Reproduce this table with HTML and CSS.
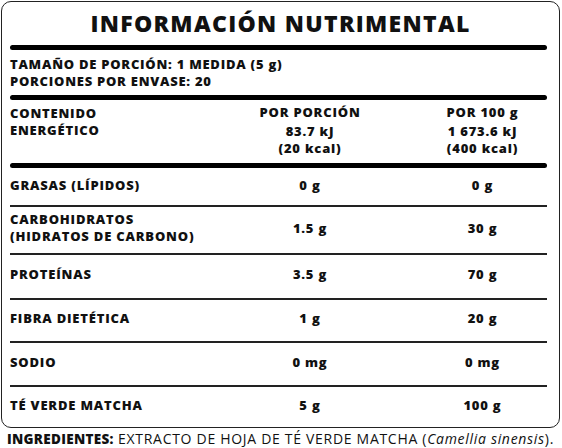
FILE: index.html
```html
<!DOCTYPE html>
<html lang="es">
<head>
<meta charset="utf-8">
<link rel="stylesheet" href="styles.css">
</head>
<body>
<div class="page">
  <section class="label">
    <h1 class="title">INFORMACIÓN NUTRIMENTAL</h1>
    <div class="rule thick"></div>
    <div class="serving">
      <div>TAMAÑO DE PORCIÓN: 1 MEDIDA (5 g)</div>
      <div>PORCIONES POR ENVASE: 20</div>
    </div>
    <div class="rule thick"></div>
    <div class="grid head">
      <div class="name">CONTENIDO<br>ENERGÉTICO</div>
      <div class="val"><div class="colhead">POR PORCIÓN</div><div>83.7 kJ<br>(20 kcal)</div></div>
      <div class="val v3"><div class="colhead">POR 100 g</div><div>1 673.6 kJ<br>(400 kcal)</div></div>
    </div>
    <div class="rule thick"></div>
    <div class="grid row r1">
      <div class="name">GRASAS (LÍPIDOS)</div>
      <div class="val">0 g</div>
      <div class="val v3">0 g</div>
    </div>
    <div class="rule thin"></div>
    <div class="grid row r2">
      <div class="name">CARBOHIDRATOS<br>(HIDRATOS DE CARBONO)</div>
      <div class="val">1.5 g</div>
      <div class="val v3">30 g</div>
    </div>
    <div class="rule thin"></div>
    <div class="grid row r3">
      <div class="name">PROTEÍNAS</div>
      <div class="val">3.5 g</div>
      <div class="val v3">70 g</div>
    </div>
    <div class="rule thin"></div>
    <div class="grid row r4">
      <div class="name">FIBRA DIETÉTICA</div>
      <div class="val">1 g</div>
      <div class="val v3">20 g</div>
    </div>
    <div class="rule thin"></div>
    <div class="grid row r5">
      <div class="name">SODIO</div>
      <div class="val">0 mg</div>
      <div class="val v3">0 mg</div>
    </div>
    <div class="rule thin"></div>
    <div class="grid row r6">
      <div class="name">TÉ VERDE MATCHA</div>
      <div class="val">5 g</div>
      <div class="val v3">100 g</div>
    </div>
  </section>
  <p class="ingredients"><b>INGREDIENTES:</b> EXTRACTO DE HOJA DE TÉ VERDE MATCHA (<i>Camellia sinensis</i>).</p>
</div>
</body>
</html>
```
FILE: styles.css
```css
* { box-sizing: border-box; }
html, body { margin: 0; padding: 0; background: #fff; }
body {
  font-family: "Open Sans", Inter, "DejaVu Sans", sans-serif;
  color: #111;
}
.page { padding: 1px 0 0 1px; width: 562px; }
.label {
  width: 559px;
  height: 427px;
  border: 1.5px solid #222;
  border-radius: 10px;
  padding: 0 12px 0 8px;
  display: flex;
  flex-direction: column;
}
.title {
  margin: 0 0 0 4px;
  text-align: center;
  font-size: 23px;
  font-weight: 800;
  letter-spacing: 1.3px;
  line-height: 28px;
  padding: 7px 0 8px 0;
}
.rule { flex: none; }
.rule.thick { height: 5px; background: #000; border-radius: 3px; }
.rule.thin { height: 1.5px; background: #222; }
.serving {
  font-weight: 800;
  font-size: 13px;
  line-height: 17px;
  letter-spacing: 0.75px;
  padding: 6px 0 5px 0;
}
.grid {
  display: grid;
  grid-template-columns: 200px 200px 1fr;
  align-items: center;
  font-weight: 800;
  font-size: 13px;
  line-height: 17px;
  letter-spacing: 0.8px;
  flex: none;
}
.val { text-align: center; }
.v3 { padding-left: 8px; }
.head { height: 63px; align-items: start; padding-top: 4px; }
.head .name { padding-top: 1px; }
.head .colhead { margin-bottom: 2px; }
.row { padding-bottom: 3px; }
.r1 { height: 37px; }
.r2 { height: 46.5px; }
.r3 { height: 43.5px; }
.r4 { height: 41.5px; }
.r5 { height: 42.5px; }
.r6 { flex: 1; }
.ingredients {
  margin: 3px 0 0 6px;
  font-size: 14px;
  line-height: 15px;
  height: 16px;
  letter-spacing: 0.7px;
  white-space: nowrap;
}
.ingredients b { font-weight: 800; font-size: 13.5px; letter-spacing: 0.3px; }
```
